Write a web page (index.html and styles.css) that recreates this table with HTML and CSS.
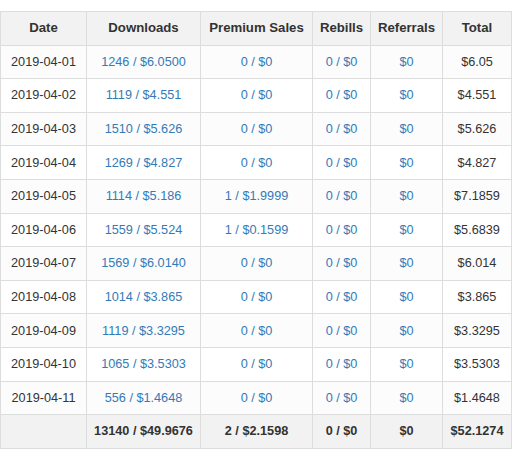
FILE: index.html
```html
<!DOCTYPE html>
<html>
<head>
<meta charset="utf-8">
<link rel="stylesheet" href="styles.css">
</head>
<body>
<table class="stats">
  <colgroup>
    <col class="c-date"><col class="c-dl"><col class="c-ps"><col class="c-rb"><col class="c-rf"><col class="c-tot">
  </colgroup>
  <thead>
    <tr><th>Date</th><th>Downloads</th><th>Premium Sales</th><th>Rebills</th><th>Referrals</th><th>Total</th></tr>
  </thead>
  <tbody>
    <tr><td>2019-04-01</td><td><a>1246 / $6.0500</a></td><td><a>0 / $0</a></td><td><a>0 / $0</a></td><td><a>$0</a></td><td>$6.05</td></tr>
    <tr><td>2019-04-02</td><td><a>1119 / $4.551</a></td><td><a>0 / $0</a></td><td><a>0 / $0</a></td><td><a>$0</a></td><td>$4.551</td></tr>
    <tr><td>2019-04-03</td><td><a>1510 / $5.626</a></td><td><a>0 / $0</a></td><td><a>0 / $0</a></td><td><a>$0</a></td><td>$5.626</td></tr>
    <tr><td>2019-04-04</td><td><a>1269 / $4.827</a></td><td><a>0 / $0</a></td><td><a>0 / $0</a></td><td><a>$0</a></td><td>$4.827</td></tr>
    <tr><td>2019-04-05</td><td><a>1114 / $5.186</a></td><td><a>1 / $1.9999</a></td><td><a>0 / $0</a></td><td><a>$0</a></td><td>$7.1859</td></tr>
    <tr><td>2019-04-06</td><td><a>1559 / $5.524</a></td><td><a>1 / $0.1599</a></td><td><a>0 / $0</a></td><td><a>$0</a></td><td>$5.6839</td></tr>
    <tr><td>2019-04-07</td><td><a>1569 / $6.0140</a></td><td><a>0 / $0</a></td><td><a>0 / $0</a></td><td><a>$0</a></td><td>$6.014</td></tr>
    <tr><td>2019-04-08</td><td><a>1014 / $3.865</a></td><td><a>0 / $0</a></td><td><a>0 / $0</a></td><td><a>$0</a></td><td>$3.865</td></tr>
    <tr><td>2019-04-09</td><td><a>1119 / $3.3295</a></td><td><a>0 / $0</a></td><td><a>0 / $0</a></td><td><a>$0</a></td><td>$3.3295</td></tr>
    <tr><td>2019-04-10</td><td><a>1065 / $3.5303</a></td><td><a>0 / $0</a></td><td><a>0 / $0</a></td><td><a>$0</a></td><td>$3.5303</td></tr>
    <tr><td>2019-04-11</td><td><a>556 / $1.4648</a></td><td><a>0 / $0</a></td><td><a>0 / $0</a></td><td><a>$0</a></td><td>$1.4648</td></tr>
  </tbody>
  <tfoot>
    <tr><td></td><td>13140 / $49.9676</td><td>2 / $2.1598</td><td>0 / $0</td><td>$0</td><td>$52.1274</td></tr>
  </tfoot>
</table>
</body>
</html>
```

FILE: styles.css
```css
html, body {
  margin: 0;
  padding: 0;
  background: #ffffff;
}
body {
  padding-top: 11px;
  font-family: "Liberation Sans", Arial, sans-serif;
  font-size: 12.7px;
  color: #333333;
}
.stats {
  border-collapse: collapse;
  table-layout: fixed;
  width: 511px;
}
.c-date { width: 86px; }
.c-dl { width: 114px; }
.c-ps { width: 112px; }
.c-rb { width: 58px; }
.c-rf { width: 72px; }
.c-tot { width: 69px; }
.stats th, .stats td {
  border: 1px solid #dddddd;
  padding: 7.3px 0;
  line-height: 18px;
  text-align: center;
  white-space: nowrap;
}
.stats thead th {
  background: #f2f2f2;
  font-weight: bold;
  font-size: 13.2px;
  border-bottom: 1px solid #dddddd;
}
.stats tbody tr:nth-child(odd) td {
  background: #fcfcfc;
}
.stats tfoot td {
  background: #f2f2f2;
  font-weight: bold;
}
.stats a {
  color: #337ab7;
  text-decoration: none;
}
```
